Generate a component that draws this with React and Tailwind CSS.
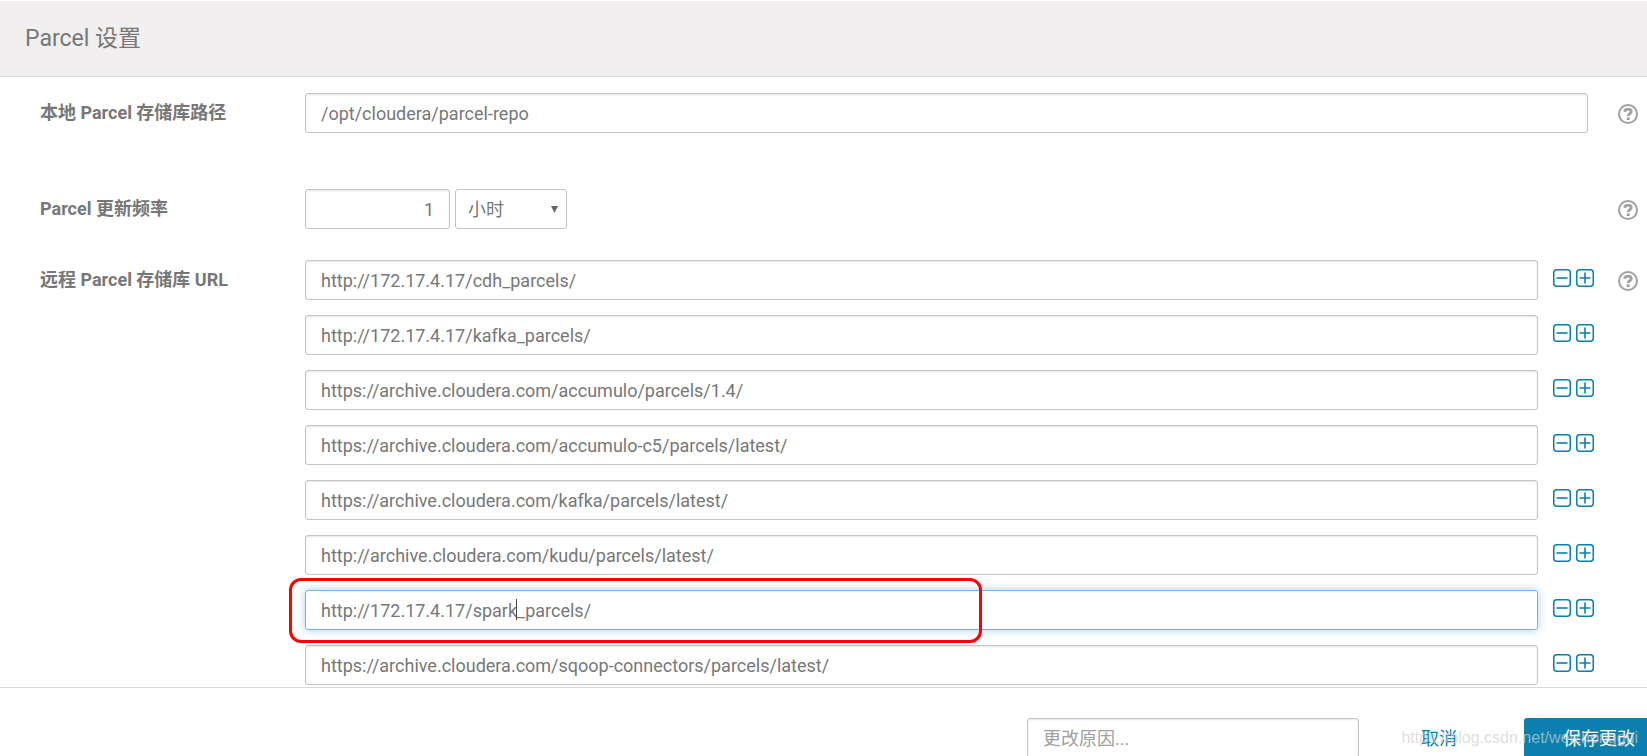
import React from 'react';

const REMOTE_URLS = [
  'http://172.17.4.17/cdh_parcels/',
  'http://172.17.4.17/kafka_parcels/',
  'https://archive.cloudera.com/accumulo/parcels/1.4/',
  'https://archive.cloudera.com/accumulo-c5/parcels/latest/',
  'https://archive.cloudera.com/kafka/parcels/latest/',
  'http://archive.cloudera.com/kudu/parcels/latest/',
  'http://172.17.4.17/spark_parcels/',
  'https://archive.cloudera.com/sqoop-connectors/parcels/latest/',
];

const ACTIVE_URL = 6;

const inputClass =
  'h-10 min-w-0 rounded-[3px] border bg-white px-[15px] outline-none placeholder:text-[#a0a0a0]';
const idleClass = 'border-[#c4c4c4] shadow-[inset_0_1px_2px_rgba(0,0,0,0.1)]';
const activeClass = 'border-[#72b8ea] shadow-[0_0_8px_rgba(102,175,233,0.6)]';

const MinusSquare = () => (
  <svg className="block size-[18px]" viewBox="0 0 18 18" fill="none" stroke="#0b7fad">
    <rect x="0.75" y="0.75" width="16.5" height="16.5" rx="3" strokeWidth="1.5" />
    <path d="M3.5 9h11" strokeWidth="1.6" />
  </svg>
);

const PlusSquare = () => (
  <svg className="block size-[18px]" viewBox="0 0 18 18" fill="none" stroke="#0b7fad">
    <rect x="0.75" y="0.75" width="16.5" height="16.5" rx="3" strokeWidth="1.5" />
    <path d="M3.5 9h11M9 3.5v11" strokeWidth="1.6" />
  </svg>
);

const HelpButton = () => (
  <button type="button" aria-label="帮助" className="mt-[11px] h-5 w-5 shrink-0">
    <svg className="block size-5" viewBox="0 0 20 20" fill="none" stroke="#a0a0a0">
      <circle cx="10" cy="10" r="9" strokeWidth="2" />
      <path d="M6.3 7.6C7.2 5.8 8.4 5.1 10 5.1c1.9 0 3.2 1.1 3.2 2.5 0 2.1-3 2.1-3 4.5" strokeWidth="2.9" />
      <path d="M8.7 14.7h3" strokeWidth="2.8" />
    </svg>
  </button>
);

const Row = ({ label, htmlFor, className = '', children }) => (
  <div className={`flex items-start pr-[9px] pl-10 ${className}`}>
    <label htmlFor={htmlFor} className="w-[265px] shrink-0 font-bold leading-10">{label}</label>
    <div className="min-w-0 flex-1">{children}</div>
    <HelpButton />
  </div>
);

const UrlRow = ({ url, index }) => {
  const active = index === ACTIVE_URL;
  return (
    <div className="flex items-start">
      <div className="relative flex min-w-0 flex-1">
        <input
          id={`url-${index}`}
          aria-label={`URL ${index + 1}`}
          defaultValue={url}
          className={`${inputClass} flex-1 ${active ? activeClass : idleClass}`}
        />
        {active && (
          <>
            <span className="absolute top-[9px] left-[211px] h-[21px] w-px bg-[#444]" />
            <span className="pointer-events-none absolute -top-3 -left-4 z-10 h-[65px] w-[693px] rounded-xl border-3 border-[#fe0000]" />
          </>
        )}
      </div>
      <div className="mt-[9px] ml-[15px] flex gap-[5px]">
        <button type="button" aria-label="删除"><MinusSquare /></button>
        <button type="button" aria-label="添加"><PlusSquare /></button>
      </div>
    </div>
  );
};

const App = () => (
  <div className="flex h-screen flex-col overflow-hidden bg-white pt-px font-[Roboto,'Noto_Sans_CJK_SC',sans-serif] text-[18px] text-[#777]">
    <header className="shrink-0 border-b border-[#dadada] bg-[#f1eff0] px-[25px] py-5">
      <h1 className="text-[23px] leading-[35px]">Parcel 设置</h1>
    </header>

    <main className="min-h-0 flex-1 overflow-hidden pt-4">
      <Row label="本地 Parcel 存储库路径" htmlFor="repo-path" className="mb-14">
        <div className="flex pr-[30px]">
          <input id="repo-path" defaultValue="/opt/cloudera/parcel-repo" className={`${inputClass} flex-1 ${idleClass}`} />
        </div>
      </Row>

      <Row label="Parcel 更新频率" htmlFor="frequency" className="mb-[31px]">
        <div className="flex gap-[5px]">
          <input id="frequency" defaultValue="1" className={`${inputClass} w-[145px] text-right ${idleClass}`} />
          <div className="relative">
            <select aria-label="单位" className="h-10 w-28 appearance-none rounded-[3px] border border-[#c4c4c4] bg-white px-3 outline-none">
              <option>小时</option>
            </select>
            <svg className="pointer-events-none absolute top-[17px] right-[9px] h-[7px] w-[7px]" viewBox="0 0 7 7" fill="#666">
              <path d="M0 0h7L3.5 7z" />
            </svg>
          </div>
        </div>
      </Row>

      <Row label="远程 Parcel 存储库 URL" htmlFor="url-0">
        <div className="flex flex-col gap-[15px] pr-6">
          {REMOTE_URLS.map((url, i) => <UrlRow key={url} url={url} index={i} />)}
        </div>
      </Row>
    </main>

    <footer className="relative flex h-[69px] shrink-0 items-start justify-end border-t border-[#dadada] pt-[30px]">
      <input aria-label="更改原因" placeholder="更改原因..." className={`${inputClass} w-[332px] ${idleClass}`} />
      <button type="button" className="mr-[27px] ml-[22px] h-10 px-10 text-[#0b7fad]">取消</button>
      <button type="button" className="h-10 w-[123px] rounded-l-[3px] bg-[#0b7fad] pr-3 text-right text-white">保存更改</button>
      <span className="pointer-events-none absolute top-[38px] right-[9px] font-['Liberation_Sans',sans-serif] text-base leading-6 text-[#d0d0d0]/70">
        https://blog.csdn.net/weizhonggui
      </span>
    </footer>
  </div>
);

export default App;
